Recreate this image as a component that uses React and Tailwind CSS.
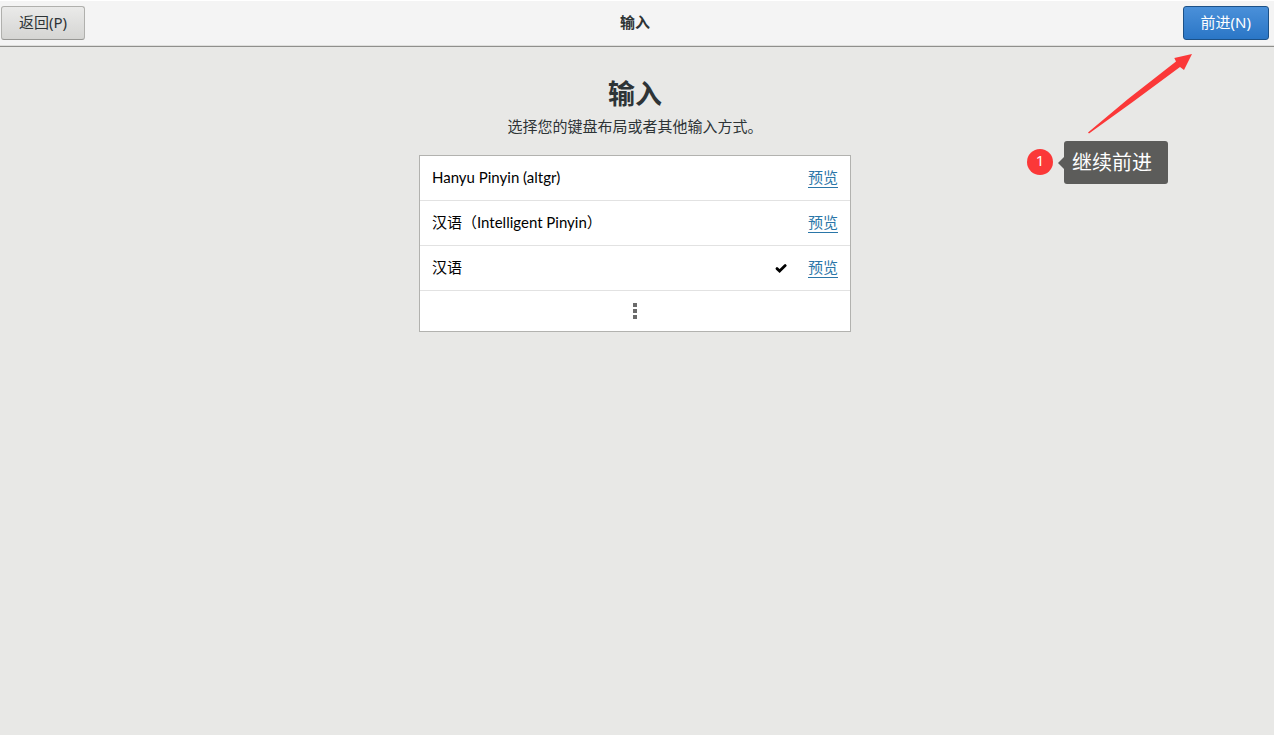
import clsx from "clsx";

const sources = [
  { id: "altgr", name: "Hanyu Pinyin (altgr)" },
  { id: "libpinyin", name: "汉语（Intelligent Pinyin）" },
  { id: "cn", name: "汉语", selected: true },
];

function HeaderButton({ primary, children }) {
  return (
    <button
      type="button"
      className={clsx(
        "h-[34px] rounded-[3px] border px-[17px] pb-0.5 leading-5",
        primary
          ? "border-[#1c5187] bg-linear-to-b from-[#4a90d9] to-[#2a76c6] text-white"
          : "border-[#b0b0ad] border-b-[#979794] bg-linear-to-b from-[#eaeae9] to-[#d5d5d3] text-[#2e3436]"
      )}
    >
      {children}
    </button>
  );
}

function CheckIcon() {
  return (
    <svg className="h-3 w-3" viewBox="0 0 12 12" aria-label="已选择" role="img">
      <path d="M2 6.6 4.6 9 10.2 3.6" fill="none" stroke="#000" strokeWidth="2.8" strokeLinecap="round" />
    </svg>
  );
}

function SourceRow({ source }) {
  return (
    <li className="flex h-[45px] items-center border-b border-[#e2e2e2] px-3">
      <span className="flex-1 pb-0.5 font-['Lato','Noto_Sans_CJK_SC',sans-serif] text-black">{source.name}</span>
      {source.selected && <CheckIcon />}
      <a href="#preview" className="mb-0.5 ml-[21px] border-b border-[#2a76a8] leading-5 text-[#2a76a8]">
        预览
      </a>
    </li>
  );
}

// Numbered step, its tooltip and the arrow that points at the forward button
function Hint() {
  return (
    <div className="absolute top-[54px] right-[106px] flex flex-col items-end">
      <svg className="-mr-6 h-20 w-[104px]" viewBox="0 0 104 80" aria-hidden="true">
        <path
          d="M0 78.500 40 45 88 7.500 86.300 4 104 0 96 16 92 13 44 48.500 1 79.500Z"
          fill="#fb3838"
        />
      </svg>
      <div className="mt-[7px] flex items-center">
        <span className="mb-0.5 flex h-[26px] w-[26px] items-center justify-center rounded-full bg-[#fb3838] pb-0.5 text-[15px] text-white">
          1
        </span>
        <svg className="ml-[5px] h-3 w-1.5" viewBox="0 0 6 12" aria-hidden="true">
          <path d="M6 0 0 6 6 12Z" fill="#5c5c5a" />
        </svg>
        <p className="h-[43px] rounded-[3px] bg-[#5c5c5a] pr-4 pl-2 text-xl leading-[44px] text-white">
          继续前进
        </p>
      </div>
    </div>
  );
}

export default function App() {
  return (
    <div className="relative min-h-screen bg-[#e8e8e6] font-['Noto_Sans','Noto_Sans_CJK_SC',sans-serif] text-[15px] text-[#2e3436]">
      <header className="grid h-[47px] grid-cols-[1fr_auto_1fr] items-center border-b border-[#8f8f8c] bg-[#f4f4f4] pr-[5px] pl-px shadow-[inset_0_1px_#fff,inset_0_-1px_#dededc]">
        <div>
          <HeaderButton>返回(P)</HeaderButton>
        </div>
        <h2 className="pb-0.5 font-bold">输入</h2>
        <div className="text-right">
          <HeaderButton primary>前进(N)</HeaderButton>
        </div>
      </header>

      <main className="flex flex-col items-center pt-[29px] pr-1">
        <h1 className="text-[27px] leading-9 font-bold">输入</h1>
        <p className="mt-0.5 leading-6">选择您的键盘布局或者其他输入方式。</p>

        <ul className="mt-[17px] w-full max-w-[432px] border border-[#b2b2af] bg-white">
          {sources.map((source) => (
            <SourceRow key={source.id} source={source} />
          ))}
          <li>
            <button type="button" aria-label="更多" className="flex h-10 w-full items-center justify-center">
              <svg className="h-4 w-1" viewBox="0 0 4 16" fill="#6b6b6b" aria-hidden="true">
                <path d="M0 0h4v4H0zM0 6h4v4H0zM0 12h4v4H0z" />
              </svg>
            </button>
          </li>
        </ul>
      </main>

      <Hint />
    </div>
  );
}
